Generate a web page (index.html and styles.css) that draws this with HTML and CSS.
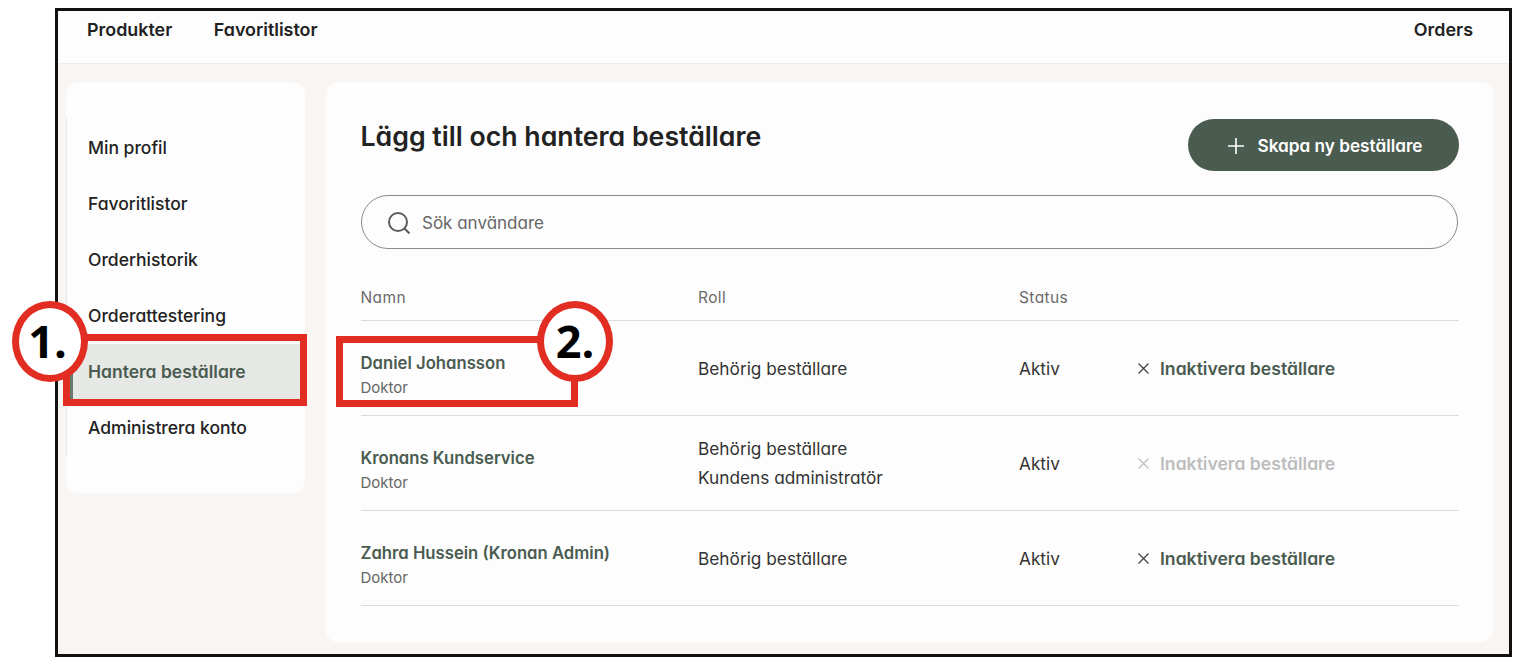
FILE: index.html
```html
<!DOCTYPE html>
<html lang="sv">
<head>
<meta charset="utf-8">
<title>Lägg till och hantera beställare</title>
<link rel="stylesheet" href="styles.css">
</head>
<body>
<div class="frame">
  <header class="topbar">
    <nav class="topnav">
      <a>Produkter</a>
      <a>Favoritlistor</a>
    </nav>
    <a>Orders</a>
  </header>
  <div class="content">
    <aside class="sidebar">
      <ul class="menu">
        <li>Min profil</li>
        <li>Favoritlistor</li>
        <li>Orderhistorik</li>
        <li>Orderattestering</li>
        <li class="active">Hantera beställare</li>
        <li>Administrera konto</li>
      </ul>
    </aside>
    <main class="panel">
      <div class="panel-head">
        <h1>Lägg till och hantera beställare</h1>
        <button class="btn">
          <svg class="plus" viewBox="0 0 16 16" width="16" height="16"><path d="M8 0v16M0 8h16" stroke="currentColor" stroke-width="1.6" fill="none"/></svg>
          Skapa ny beställare
        </button>
      </div>
      <div class="search">
        <svg viewBox="0 0 22 22" width="22" height="22"><circle cx="10" cy="10" r="9" stroke="#5c5c5c" stroke-width="2" fill="none"/><path d="M16.5 16.5L21.5 21.5" stroke="#5c5c5c" stroke-width="2" fill="none"/></svg>
        <span>Sök användare</span>
      </div>
      <div class="table">
        <div class="row head">
          <div>Namn</div><div>Roll</div><div>Status</div><div></div>
        </div>
        <div class="row">
          <div><div class="name">Daniel Johansson</div><div class="sub">Doktor</div></div>
          <div class="roles">Behörig beställare</div>
          <div>Aktiv</div>
          <a class="action"><svg viewBox="0 0 11 11" width="11" height="11"><path d="M0.5 0.5l10 10M10.5 0.5l-10 10" stroke="currentColor" stroke-width="1.3" fill="none"/></svg>Inaktivera beställare</a>
        </div>
        <div class="row">
          <div><div class="name">Kronans Kundservice</div><div class="sub">Doktor</div></div>
          <div class="roles">Behörig beställare<br>Kundens administratör</div>
          <div>Aktiv</div>
          <a class="action off"><svg viewBox="0 0 11 11" width="11" height="11"><path d="M0.5 0.5l10 10M10.5 0.5l-10 10" stroke="currentColor" stroke-width="1.3" fill="none"/></svg>Inaktivera beställare</a>
        </div>
        <div class="row">
          <div><div class="name">Zahra Hussein (Kronan Admin)</div><div class="sub">Doktor</div></div>
          <div class="roles">Behörig beställare</div>
          <div>Aktiv</div>
          <a class="action"><svg viewBox="0 0 11 11" width="11" height="11"><path d="M0.5 0.5l10 10M10.5 0.5l-10 10" stroke="currentColor" stroke-width="1.3" fill="none"/></svg>Inaktivera beställare</a>
        </div>
      </div>
    </main>
  </div>
</div>
<div class="mark box-one"></div>
<div class="mark box-two"></div>
<div class="mark badge badge-one">1.</div>
<div class="mark badge badge-two">2.</div>
</body>
</html>
```
FILE: styles.css
```css
* { box-sizing: border-box; }
html, body { margin: 0; height: 100%; }
body {
  background: #fff;
  padding: 8px 6px 0 55px;
  font-family: "Inter", "Liberation Sans", sans-serif;
  font-feature-settings: "cv11" 1;
  color: #222;
  overflow: hidden;
  position: relative;
}
.frame {
  height: 649px;
  border: 3px solid #111;
  background: #f8f5f2;
  display: flex;
  flex-direction: column;
}
.topbar {
  height: 53px;
  flex: none;
  background: #fdfdfd;
  border-bottom: 1px solid #f0eeec;
  display: flex;
  justify-content: space-between;
  padding: 7px 36px 0 29px;
  font-size: 17.9px;
  font-weight: 600;
  line-height: 24px;
}
.topnav { display: flex; gap: 41.5px; }
.content {
  display: flex;
  align-items: flex-start;
  gap: 21px;
  padding: 18px 16px 0 8px;
}
.sidebar {
  width: 239px;
  height: 411px;
  flex: none;
  background: #fdfdfd;
  border-radius: 12px;
  padding: 36px 0 0;
}
.menu {
  list-style: none;
  margin: 0;
  padding: 1.5px 0 0;
  border-left: 1px solid #e8e8e6;
}
.menu li {
  height: 56px;
  padding-left: 21px;
  display: flex;
  align-items: center;
  font-size: 17.5px;
  font-weight: 500;
  color: #222;
}
.menu li.active {
  background: #e6e8e5;
  color: #4a5b50;
  font-weight: 600;
  border-left: 7px solid #6b7a70;
  margin-left: -1px;
  padding-left: 15px;
}
.panel {
  flex: 1;
  height: 560px;
  background: #fdfdfd;
  border-radius: 12px;
  padding: 37px 34px 0 35px;
}
.panel-head {
  display: flex;
  justify-content: space-between;
  align-items: flex-start;
}
h1 {
  margin: 0 0 0 -0.5px;
  font-size: 26.7px;
  font-weight: 600;
  line-height: 34px;
  color: #222;
}
.btn {
  width: 271px;
  height: 52px;
  border: 0;
  border-radius: 26px;
  background: #4a5b50;
  color: #fff;
  font: 600 17.2px "Inter", "Liberation Sans", sans-serif;
  font-feature-settings: "cv11" 1;
  display: flex;
  align-items: center;
  justify-content: center;
  gap: 13px;
  padding: 1px 0 0 4px;
}
.search {
  margin-top: 24px;
  margin-right: 1px;
  height: 54px;
  border: 1px solid #8a8a8a;
  border-radius: 27px;
  display: flex;
  align-items: center;
  gap: 12px;
  padding: 2px 0 0 26px;
  font-size: 17px;
  color: #666;
}
.table { margin-top: 27px; }
.row {
  display: grid;
  grid-template-columns: 337px 321px 119px 1fr;
  align-items: center;
  height: 95px;
  border-bottom: 1px solid #dcdcdc;
  font-size: 17.25px;
  color: #333;
  line-height: 29px;
}
.row > :first-child { margin-left: -0.5px; }
.row.head {
  height: 45px;
  font-size: 15.5px;
  letter-spacing: 0.4px;
  color: #6a6a6a;
  align-items: flex-start;
  line-height: 44px;
}
.name { font-size: 16.7px; font-weight: 600; color: #4a5b50; line-height: 26px; margin-top: 12px; }
.sub { font-size: 15px; color: #666; line-height: 22px; margin-top: 1px; }
.action {
  display: flex;
  align-items: center;
  gap: 11px;
  font-size: 17.6px;
  font-weight: 600;
  color: #4a5b50;
}
.action svg { color: #444; }
.action.off, .action.off svg { color: #bdbdbd; }
.mark { position: absolute; }
.box-one { left: 63px; top: 334px; width: 244px; height: 72px; border: 7px solid #e22d22; }
.box-two { left: 336px; top: 336px; width: 242px; height: 71px; border: 7px solid #e22d22; }
.badge {
  width: 76px;
  height: 81px;
  border: 7px solid #e22d22;
  border-radius: 50%;
  background: #fff;
  color: #000;
  display: flex;
  align-items: center;
  justify-content: center;
  padding-bottom: 3px;
  font: 700 45px "Open Sans", sans-serif;
}
.badge-one { left: 12px; top: 301px; padding-right: 5px; }
.badge-two { left: 537px; top: 301px; }
```
